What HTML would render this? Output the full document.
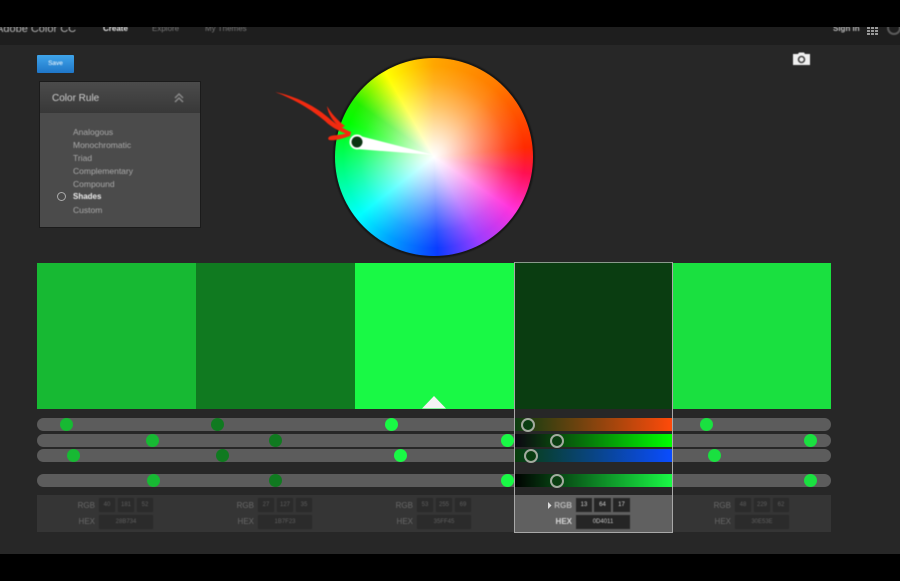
<!DOCTYPE html>
<html><head><meta charset="utf-8"><style>
html,body{margin:0;padding:0;background:#000}
body{width:900px;height:581px;position:relative;overflow:hidden;font-family:"Liberation Sans",sans-serif}
.a{position:absolute}
.t{position:absolute;white-space:nowrap;filter:blur(.5px)}
.track{position:absolute;left:37px;width:794px;height:13px;border-radius:7px;background:#5c5c5c}
.dot{position:absolute;width:13px;height:13px;border-radius:50%}
.h{position:absolute;width:10px;height:10px;border-radius:50%;border:2px solid #a3ab9f;background:#0a3d11;filter:blur(.3px)}
.box{position:absolute;background:#2b2b2b;color:#5f5f5f;font-size:6px;text-align:center;line-height:14px;height:14px;filter:blur(.4px)}
.lab{position:absolute;color:#6a6a6a;font-size:8px;line-height:10px;text-align:right;width:40px;filter:blur(.5px)}
.rule{position:absolute;left:73px;color:#aaa;font-size:8.500px;filter:blur(.45px);white-space:nowrap}
</style></head><body>
<div class="a" style="left:0;top:27px;width:900px;height:527px;background:#272727"></div>
<div class="a" style="left:0;top:27px;width:900px;height:18px;background:#1e1e1e"></div>

<div class="a" style="left:0;top:27px;width:900px;height:18px;overflow:hidden">
<div class="t" style="left:-4px;top:-4px;color:#b4b4b4;font-size:11px">Adobe Color CC</div>
<div class="t" style="left:103px;top:-3px;color:#e4e4e4;font-size:8px;font-weight:bold">Create</div>
<div class="t" style="left:152px;top:-3px;color:#777;font-size:8px">Explore</div>
<div class="t" style="left:205px;top:-3px;color:#777;font-size:8px">My Themes</div>
<div class="t" style="left:833px;top:-3px;color:#bbb;font-size:8px;font-weight:bold">Sign In</div>
<svg class="a" style="left:867px;top:0;filter:blur(.3px)" width="11" height="8"><g fill="#999"><rect y="0" width="3" height="2"/><rect x="4" y="0" width="3" height="2"/><rect x="8" y="0" width="3" height="2"/><rect y="3" width="3" height="2"/><rect x="4" y="3" width="3" height="2"/><rect x="8" y="3" width="3" height="2"/><rect y="6" width="3" height="2"/><rect x="4" y="6" width="3" height="2"/><rect x="8" y="6" width="3" height="2"/></g></svg>
<div class="a" style="left:887px;top:-6px;width:10px;height:10px;border:2px solid #5c5c5c;border-radius:50%;filter:blur(.4px)"></div>
</div>

<div class="a" style="left:37px;top:55px;width:37px;height:18px;background:linear-gradient(#3fa4ea,#1f76c8);border-radius:1px"></div>
<div class="t" style="left:37px;top:60px;width:37px;text-align:center;color:#fff;font-size:6.500px">Save</div>

<!-- Color rule panel -->
<div class="a" style="left:39px;top:81px;width:162px;height:147px;background:#1b1b1b"></div>
<div class="a" style="left:40px;top:82px;width:160px;height:145px;background:#4b4b4b"></div>
<div class="a" style="left:40px;top:82px;width:160px;height:31px;background:linear-gradient(#4b4b4b,#383838)"></div>
<div class="t" style="left:52px;top:93px;color:#d0d0d0;font-size:10px">Color Rule</div>
<svg class="a" style="left:173px;top:92px;filter:blur(.4px)" width="12" height="11" fill="none" stroke="#8a8a8a" stroke-width="1.500"><path d="M2 6L6 2L10 6M2 10L6 6L10 10"/></svg>
<div class="rule" style="top:127px">Analogous</div>
<div class="rule" style="top:140px">Monochromatic</div>
<div class="rule" style="top:153px">Triad</div>
<div class="rule" style="top:166px">Complementary</div>
<div class="rule" style="top:179px">Compound</div>
<div class="rule" style="top:192px;color:#eee;font-weight:bold;font-size:8px">Shades</div>
<div class="rule" style="top:205px">Custom</div>
<div class="a" style="left:57px;top:192px;width:7px;height:7px;border:1px solid #aaa;border-radius:50%;filter:blur(.3px)"></div>

<!-- Wheel -->
<div class="a" style="left:333px;top:55.500px;width:202px;height:202px;border-radius:50%;background:#161616;filter:blur(.4px)"></div>
<div class="a" style="left:335px;top:57.500px;width:198px;height:198px;border-radius:50%;background:conic-gradient(from 0deg,#ffa600 0deg,#ff7c00 40deg,#ff2a00 84deg,#ff1050 100deg,#ff33dd 124deg,#9a3dff 152deg,#0a3cff 178deg,#00a0ff 208deg,#00ffff 232deg,#00ff80 262deg,#00ff00 292deg,#22f000 305deg,#ffff00 330deg,#ffc800 348deg,#ffa600 360deg)"></div>
<div class="a" style="left:335px;top:57.500px;width:198px;height:198px;border-radius:50%;background:radial-gradient(circle closest-side,#fff 0%,rgba(255,255,255,.88) 12%,rgba(255,255,255,.66) 30%,rgba(255,255,255,.38) 52%,rgba(255,255,255,.12) 75%,rgba(255,255,255,0) 92%)"></div>
<svg class="a" style="left:0;top:0;filter:blur(.4px)" width="900" height="581">
<path d="M356 135L434 155L356 149Z" fill="#fff"/>
<circle cx="357" cy="142" r="7.500" fill="#fff"/>
<circle cx="357" cy="142" r="5.500" fill="#0b3312"/>
<path d="M275 92C295 96 316 106 331 120C337 125 344 129 351 132L350 135C340 132 331 127 325 121C312 110 294 99 275 92Z" fill="#f22a10"/>
<path d="M327 106C331 113 337 120 345 126L341 128C333 122 328 114 327 106Z" fill="#f22a10"/>
<path d="M351 132L350 136C344 138 336 141 329 140C327 138 329 136 333 135.500C339 135 345 134 351 132Z" fill="#f22a10"/>
</svg>

<!-- Camera -->
<svg class="a" style="left:792px;top:51px;filter:blur(.4px)" width="19" height="15"><path d="M1 3H6L7 1.500H12L13 3H18V14H1Z" fill="#f0f0f0"/><circle cx="9.500" cy="8.500" r="3" fill="none" stroke="#444" stroke-width="1.600"/></svg>

<!-- Swatches -->
<div class="a" style="left:37px;top:263px;width:159px;height:146px;background:#17b933"></div>
<div class="a" style="left:196px;top:263px;width:159px;height:146px;background:#107a20"></div>
<div class="a" style="left:355px;top:263px;width:159px;height:146px;background:#19f945"></div>
<div class="a" style="left:673px;top:263px;width:158px;height:146px;background:#1ae040"></div>
<svg class="a" style="left:421px;top:395px" width="26" height="14"><path d="M13 1L25 13.500H1Z" fill="#f4f4f4"/></svg>

<!-- Tracks -->
<div class="track" style="top:418px"></div>
<div class="track" style="top:433.500px"></div>
<div class="track" style="top:449px"></div>
<div class="track" style="top:473.500px"></div>

<div class="dot" style="left:60px;top:418px;background:#17b933"></div>
<div class="dot" style="left:211px;top:418px;background:#107a20"></div>
<div class="dot" style="left:385px;top:418px;background:#19f945"></div>
<div class="dot" style="left:700px;top:418px;background:#1ae040"></div>
<div class="dot" style="left:146px;top:433.500px;background:#17b933"></div>
<div class="dot" style="left:269px;top:433.500px;background:#107a20"></div>
<div class="dot" style="left:501px;top:433.500px;background:#19f945"></div>
<div class="dot" style="left:804px;top:433.500px;background:#1ae040"></div>
<div class="dot" style="left:67px;top:449px;background:#17b933"></div>
<div class="dot" style="left:216px;top:449px;background:#107a20"></div>
<div class="dot" style="left:394px;top:449px;background:#19f945"></div>
<div class="dot" style="left:708px;top:449px;background:#1ae040"></div>
<div class="dot" style="left:147px;top:473.500px;background:#17b933"></div>
<div class="dot" style="left:269px;top:473.500px;background:#107a20"></div>
<div class="dot" style="left:501px;top:473.500px;background:#19f945"></div>
<div class="dot" style="left:804px;top:473.500px;background:#1ae040"></div>

<!-- Info strip -->
<div class="a" style="left:37px;top:495px;width:794px;height:37px;background:#353535"></div>

<div class="lab" style="left:55px;top:501px">RGB</div><div class="lab" style="left:55px;top:517px">HEX</div>
<div class="box" style="left:99px;top:498px;width:16px">40</div><div class="box" style="left:118px;top:498px;width:16px">181</div><div class="box" style="left:137px;top:498px;width:16px">52</div><div class="box" style="left:99px;top:515px;width:54px">28B734</div>

<div class="lab" style="left:214px;top:501px">RGB</div><div class="lab" style="left:214px;top:517px">HEX</div>
<div class="box" style="left:258px;top:498px;width:16px">27</div><div class="box" style="left:277px;top:498px;width:16px">127</div><div class="box" style="left:296px;top:498px;width:16px">35</div><div class="box" style="left:258px;top:515px;width:54px">1B7F23</div>

<div class="lab" style="left:373px;top:501px">RGB</div><div class="lab" style="left:373px;top:517px">HEX</div>
<div class="box" style="left:417px;top:498px;width:16px">53</div><div class="box" style="left:436px;top:498px;width:16px">255</div><div class="box" style="left:455px;top:498px;width:16px">69</div><div class="box" style="left:417px;top:515px;width:54px">35FF45</div>

<div class="lab" style="left:691px;top:501px">RGB</div><div class="lab" style="left:691px;top:517px">HEX</div>
<div class="box" style="left:735px;top:498px;width:16px">48</div><div class="box" style="left:754px;top:498px;width:16px">229</div><div class="box" style="left:773px;top:498px;width:16px">62</div><div class="box" style="left:735px;top:515px;width:54px">30E53E</div>

<!-- Selected column -->
<div class="a" style="left:514px;top:262px;width:158px;height:270px;background:#272727"></div>
<div class="a" style="left:514px;top:263px;width:158px;height:146px;background:#0a3d11"></div>
<div class="a" style="left:514px;top:418px;width:158px;height:13px;background:linear-gradient(90deg,#0a3d11,#ff4a0a)"></div>
<div class="a" style="left:514px;top:433.500px;width:158px;height:13px;background:linear-gradient(90deg,#0c0412,#00ff00)"></div>
<div class="a" style="left:514px;top:449px;width:158px;height:13px;background:linear-gradient(90deg,#083d08,#0a4cff)"></div>
<div class="a" style="left:514px;top:473.500px;width:158px;height:13px;background:linear-gradient(90deg,#000,#19f945)"></div>
<div class="a" style="left:514px;top:495px;width:158px;height:37px;background:#606060"></div>
<div class="a" style="left:513.500px;top:262px;width:157.500px;height:269px;border:1px solid #a8a8a8;border-top-color:#8a9a8c;filter:blur(.2px)"></div>
<div class="h" style="left:521px;top:417.500px"></div>
<div class="h" style="left:550px;top:433.500px"></div>
<div class="h" style="left:523.500px;top:448.500px"></div>
<div class="h" style="left:550px;top:473.500px"></div>
<svg class="a" style="left:547px;top:502px;filter:blur(.3px)" width="5" height="7"><path d="M1 0L4.500 3.500L1 7Z" fill="#ddd"/></svg>
<div class="lab" style="left:532px;top:501px;color:#b8b8b8;font-weight:bold">RGB</div>
<div class="lab" style="left:532px;top:517px;color:#d8d8d8;font-weight:bold">HEX</div>
<div class="box" style="left:576px;top:498px;width:16px;background:#252525;color:#d0d0d0">13</div>
<div class="box" style="left:594px;top:498px;width:17px;background:#252525;color:#d0d0d0">64</div>
<div class="box" style="left:613px;top:498px;width:17px;background:#252525;color:#d0d0d0">17</div>
<div class="box" style="left:576px;top:515px;width:54px;background:#252525;color:#c8c8c8">0D4011</div>
</body></html>
